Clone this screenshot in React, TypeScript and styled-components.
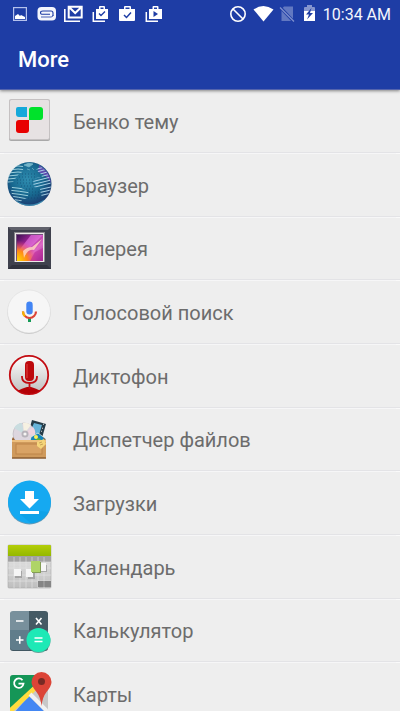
import React from "react";
import styled, { createGlobalStyle } from "styled-components";

const GlobalStyle = createGlobalStyle`
  * { box-sizing: border-box; }
  body {
    margin: 0;
    background: #eeeeee;
    font-family: Roboto, "Noto Sans", sans-serif;
  }
`;

const Screen = styled.div`
  display: flex;
  flex-direction: column;
  height: 100vh;
`;

const Header = styled.header`
  position: relative;
  z-index: 1;
  flex: none;
  background: #1e3da5;
  color: #fff;
  border-bottom: 1px solid #5464ad;
  box-shadow: 0 1px 3px rgba(0, 0, 0, 0.45);
`;

const StatusBar = styled.div`
  display: flex;
  align-items: center;
  justify-content: space-between;
  height: 28px;
  padding: 0 9px 0 12px;
`;

const StatusGroup = styled.div`
  display: flex;
  align-items: center;
  gap: 7px;

  svg {
    display: block;
    overflow: visible;
  }
`;

const Clock = styled.time`
  padding-top: 1px;
  font-size: 16px;
  line-height: 20px;
  font-weight: 400;
  color: #f4f6fd;
`;

const Title = styled.h1`
  margin: 0;
  padding: 18px 18px 15px;
  font-size: 22px;
  line-height: 28px;
  font-weight: 500;
`;

const AppList = styled.ul`
  display: grid;
  flex: 1;
  grid-auto-rows: 64px 64px 63px;
  min-height: 0;
  margin: 0;
  padding: 0;
  list-style: none;
  overflow-y: auto;
  scrollbar-width: none;
`;

const AppItem = styled.li`
  display: flex;
  flex-direction: column;

  &::after {
    content: "";
    height: 2px;
    background: linear-gradient(90deg, #fafafa 4px, transparent 4px calc(100% - 4px), #fafafa calc(100% - 4px)) bottom / 100% 1px no-repeat,
      linear-gradient(#e3e3e6 50%, #f6f6f7 50%);
  }
`;

const AppButton = styled.button`
  display: flex;
  flex: 1;
  align-items: center;
  gap: 20px;
  padding: 0 5px 2px;
  border: 0;
  background: none;
  color: #6c6c6c;
  font: 400 20px/24px Roboto, "Noto Sans", sans-serif;
  text-align: left;
  cursor: pointer;

  svg { flex: none; display: block; }
`;

const Label = styled.span`
  padding-top: 3px;
`;

type IconProps = { children: React.ReactNode };

const AppIcon = ({ children }: IconProps) => (
  <svg width="48" height="48" viewBox="0 0 48 48" aria-hidden="true">{children}</svg>
);

const StatusIcon = ({ children, width = 20 }: IconProps & { width?: number }) => (
  <svg width={width} height="20" viewBox={`0 0 ${width} 20`} aria-hidden="true">{children}</svg>
);

const ThemeIcon = () => (
  <AppIcon>
    <rect x="4" y="4" width="41" height="41" rx="2" fill="#a9a9a9" />
    <rect x="4" y="3" width="41" height="41" rx="2" fill="#c5c1c2" />
    <rect x="5" y="4" width="39" height="39" rx="1.5" fill="#e7e2e3" />
    <path d="M13 11h9v10h-8q-3 0-3-3v-5q0-2 2-2z" fill="#16a8da" />
    <path d="M27 11h8q3 0 3 3v7q0 3-3 3H24V14q0-3 3-3z" fill="#00e22b" />
    <path d="M14 24h10v10q0 3-3 3h-7q-3 0-3-3v-7q0-3 3-3z" fill="#e80000" />
  </AppIcon>
);

const GlobeIcon = () => (
  <AppIcon>
    <defs>
      <radialGradient id="globe" cx="0.45" cy="0.4" r="0.6">
        <stop offset="0" stopColor="#2f8db0" />
        <stop offset="0.6" stopColor="#17688f" />
        <stop offset="1" stopColor="#1b3b70" />
      </radialGradient>
      <clipPath id="west">
        <path d="M3 16Q7 7 14 4l5 1-2 3 2 3-5 3-3 4-3 4-5 1z" />
        <path d="M7 27l6-1 7 4 4 3-2 5-5 2-2 4-5-4-4-8z" />
      </clipPath>
      <clipPath id="east"><path d="M35 6l6 5 4 8 1 8-3 8-4 3-3-3-1-6-6-2-1-5 3-4 6-1-2-4-4-3z" /></clipPath>
    </defs>
    <circle cx="24.500" cy="24" r="22" fill="url(#globe)" />
    <path d="M34 5q11 6 12 18-4-8-13-11z" fill="#6f46b8" opacity=".8" />
    <g stroke="#0f3f66" strokeWidth="1" strokeDasharray="1 2" fill="none" opacity=".55">
      <path d="M17 14h15M14 17h18M12 20h18M12 23h16M16 26h11M21 29h7M24 32h12M24 35h12M23 38h13" />
    </g>
    <path d="M9 39q15 11 31 0-5 7-15 7T9 39z" fill="#4fb6d2" opacity=".6" />
    <g clipPath="url(#west)" stroke="#bfe9ef" strokeWidth=".8" fill="none">
      <path d="M3 7q10-2 20 0M3 10q10-2 20 0M3 13q10-2 20 0M3 16q10-2 20 0M3 19q10-2 20 0M3 22q10-1 20 1" />
      <path d="M3 27q11 1 22 3M3 30q11 1 23 3M3 33q11 1 22 3M5 36q8 1 18 3M5 39q8 1 18 3" />
    </g>
    <g clipPath="url(#east)" stroke="#b8dcef" strokeWidth=".9" fill="none">
      <path d="M28 10l16-4M28 13l18-5M28 16l18-5M26 19l20-5M26 22l20-5M26 25l20-5M26 28l20-5M28 31l18-4M28 34l18-4M30 37l16-4" />
    </g>
    <path d="M19 5l5-2 4 1-4 3zM22 9l3 1M27 8l2 2" fill="#8cc9d8" stroke="#8cc9d8" strokeWidth=".7" opacity=".8" />
  </AppIcon>
);

const GalleryIcon = () => (
  <AppIcon>
    <defs>
      <linearGradient id="photo" x1="0" y1="0" x2="1" y2="1">
        <stop offset="0" stopColor="#3b1151" />
        <stop offset=".35" stopColor="#a32399" />
        <stop offset=".65" stopColor="#df69c5" />
        <stop offset="1" stopColor="#88248b" />
      </linearGradient>
      <radialGradient id="glow" cx="0" cy="1" r=".8">
        <stop offset="0" stopColor="#ffe000" />
        <stop offset=".5" stopColor="#ff8a16" />
        <stop offset="1" stopColor="#f33d87" stopOpacity="0" />
      </radialGradient>
    </defs>
    <rect x="3" y="3" width="43" height="42" fill="#3f414d" />
    <path d="M3 3h43l-3 3H6z" fill="#60616b" />
    <path d="M3 45h43l-4-4H7z" fill="#30323d" />
    <rect x="9" y="8" width="31" height="30" fill="#8a888d" />
    <rect x="10" y="9" width="29" height="29" fill="#ece8e8" />
    <rect x="11" y="10" width="27" height="27" fill="#73527b" />
    <rect x="12" y="11" width="26" height="26" fill="url(#photo)" />
    <path d="M12 29l14-18h12L23 26z" fill="#e97be6" opacity=".6" />
    <rect x="12" y="11" width="26" height="26" fill="url(#glow)" />
    <path d="M18 27q4-4 9-4l10-8-8 11q-6-2-10 8z" fill="#ffd6c2" opacity=".85" />
    <path d="M25 37l5-9 8-4v13z" fill="#c02c9a" opacity=".6" />
  </AppIcon>
);

const VoiceIcon = () => (
  <AppIcon>
    <circle cx="24" cy="25.500" r="21.500" fill="#c6c6c6" />
    <circle cx="24" cy="24.500" r="21.500" fill="#f6f6f6" stroke="#dedede" strokeWidth=".6" />
    <path d="M23 30h3v5h-3z" fill="#159b57" />
    <path d="M18 24.500a6.500 6.500 0 0 0 13 0" fill="none" stroke="#db4437" strokeWidth="2.200" />
    <path d="M18 24.500q0 3 2 4.600" fill="none" stroke="#f4b400" strokeWidth="2.200" />
    <rect x="21.300" y="14.500" width="6.400" height="13" rx="3.200" fill="#4285f4" />
  </AppIcon>
);

const RecorderIcon = () => (
  <AppIcon>
    <defs>
      <linearGradient id="disc" x1="0" y1="0" x2="0" y2="1">
        <stop offset="0" stopColor="#fff" />
        <stop offset="1" stopColor="#bdbdbd" />
      </linearGradient>
      <clipPath id="discClip"><circle cx="24" cy="24" r="19" /></clipPath>
    </defs>
    <circle cx="24" cy="24" r="19.200" fill="url(#disc)" stroke="#c30c12" strokeWidth="1.800" />
    <path d="M10 41q8-4 12-5h4q4 1 12 5l-6 5H17z" fill="#b40006" clipPath="url(#discClip)" />
    <path d="M17 25v1q0 6 7.500 6t7.500-6v-1M24.500 32v6" fill="none" stroke="#c30c12" strokeWidth="1.800" />
    <rect x="20" y="10" width="9" height="20" rx="4" fill="#bd090d" />
    <path d="M22 13v14" stroke="#e04443" strokeWidth="1" />
  </AppIcon>
);

const FilesIcon = () => (
  <AppIcon>
    <path d="M27 5l14 4-4 14-14-4z" fill="#263c48" />
    <path d="M29 8l8 2-3 10-9-3z" fill="#67b4d9" />
    <path d="M38 9l1 .5M37 13l1 .5M36 16l1 .5" stroke="#ddd" />
    <circle cx="19" cy="19" r="11" fill="#ddd6df" stroke="#b7b0b9" strokeWidth=".6" />
    <path d="M19 19L9 13q3-5 8-5z" fill="#c9dde0" />
    <path d="M19 19l9-7q3 4 2 8z" fill="#eed3df" />
    <path d="M19 19l-1-11q4-1 8 2z" fill="#f6f1e2" />
    <circle cx="20" cy="19" r="3.500" fill="#b7b3ba" /><circle cx="20" cy="19" r="1.600" fill="#f6f5f4" />
    <path d="M26 22l7-4 8 6-4 6H24z" fill="#1484b9" stroke="#f5f4eb" strokeWidth=".7" />
    <circle cx="31" cy="22" r="2" fill="#fff052" /><path d="M28 26l6-3 5 5z" fill="#5fae33" />
    <path d="M8 22l2 3h29l-1-3 3 3v3H7v-4z" fill="#9a6538" />
    <rect x="7" y="25" width="34" height="18" rx="1" fill="#cf9a5c" />
    <path d="M7 25h34v2H7z" fill="#edbe7c" />
    <rect x="11" y="29" width="26" height="10" fill="#d9a365" stroke="#bd8448" />
    <path d="M7 43h34" stroke="#8b5c31" strokeWidth="1.500" />
    <path d="M32 27l7-3 2 5-5 5-4-3z" fill="#f5d57a" /><path d="M34 28l3-1M35 30l3-1" stroke="#b6904b" strokeWidth=".7" />
  </AppIcon>
);

const DownloadIcon = () => (
  <AppIcon>
    <circle cx="24.500" cy="25" r="21.500" fill="#6b9db8" />
    <circle cx="24.500" cy="24" r="21.500" fill="#15a9f1" />
    <path d="M34 33l10 1q-6 11-18 11.500L15 36z" fill="#0694d7" opacity=".35" />
    <path d="M20 13h9v8h5l-9.500 9.500L15 21h5zM15 33h19v3H15z" fill="#fff" />
  </AppIcon>
);

const CalendarIcon = () => (
  <AppIcon>
    <defs>
      <linearGradient id="band" x1="0" y1="0" x2="0" y2="1"><stop offset="0" stopColor="#b4ce08" /><stop offset="1" stopColor="#94b800" /></linearGradient>
      <linearGradient id="pad" x1="0" y1="0" x2="0" y2="1"><stop offset="0" stopColor="#b0b0b0" /><stop offset=".45" stopColor="#dadada" /><stop offset="1" stopColor="#bebebe" /></linearGradient>
    </defs>
    <rect x="3" y="3" width="43" height="43" rx="1" fill="url(#pad)" stroke="#a8a8a8" strokeWidth=".6" />
    <path d="M3 4q0-1 1-1h41q1 0 1 1v10H3z" fill="url(#band)" />
    <path d="M3 14h43v6H3z" fill="#a2a2a2" />
    <path d="M9 15v31M15 15v31M21 15v31M27 15v31M33 15v31M39 15v31M3 20h43M3 26h43M3 33h43M3 39h43" stroke="#e6e6e6" strokeWidth=".6" />
    <path d="M33 39h13v6H33z" fill="#858585" /><path d="M39 39v6" stroke="#aaa" />
    <path d="M23 29h7v8h-7zM10 29h7v7h-7zM36 23h6v7h-6z" fill="#888" opacity=".6" />
    <path d="M9 27h7v7H9zM21 27h7v8h-7zM35 21h6v8h-6z" fill="#f6f6f6" />
    <rect x="27" y="20" width="9" height="11" fill="#849e54" />
    <rect x="26" y="19" width="9" height="11" fill="#afd467" />
  </AppIcon>
);

const CalculatorIcon = () => (
  <AppIcon>
    <rect x="5" y="6" width="38" height="39" rx="3" fill="#415761" />
    <path d="M8 5h16v19H5V8q0-3 3-3z" fill="#78909c" />
    <path d="M24 5h16q3 0 3 3v16H24z" fill="#455a64" />
    <path d="M5 24h19v20H8q-3 0-3-3z" fill="#607d8b" />
    <path d="M24 24h19v17q0 3-3 3H24z" fill="#526b77" />
    <path d="M11 15h7.500M31 12l5.500 6.500m0-6.500L31 18.500M11 34h7.500m-3.750-3.750v7.500" stroke="#fff" strokeWidth="1.600" />
    <circle cx="33.500" cy="35" r="12" fill="#438f82" opacity=".8" />
    <circle cx="33.500" cy="34" r="12" fill="#1de9b6" />
    <path d="M29.500 32h8M29.500 35.500h8" stroke="#fff" strokeWidth="1.600" />
  </AppIcon>
);

const MapsIcon = () => (
  <AppIcon>
    <defs><clipPath id="map"><rect x="5" y="6" width="38" height="39" rx="3" /></clipPath></defs>
    <g clipPath="url(#map)">
      <path d="M5 6h38v39H5z" fill="#c8c8c8" />
      <path d="M5 6h35L5 41z" fill="#159657" />
      <path d="M8 45l16-18 18 18z" fill="#4387f3" />
      <path d="M3 44l27-25" stroke="#ffdc3e" strokeWidth="5" />
      <path d="M25 25l20 20" stroke="#f1f1f1" strokeWidth="4" />
    </g>
    <path d="M17.500 11.200a4.700 4.700 0 1 0 1 3.500h-5" fill="none" stroke="#fff" strokeWidth="1.800" />
    <path d="M36.500 37q-1-9-5-14-5-6-5-10a10 10 0 0 1 20 0q0 4-5 10-4 5-5 14z" fill="#dc4437" />
    <circle cx="36.500" cy="12.500" r="3.500" fill="#782a24" />
  </AppIcon>
);

const apps = [
  { name: "Бенко тему", Icon: ThemeIcon },
  { name: "Браузер", Icon: GlobeIcon },
  { name: "Галерея", Icon: GalleryIcon },
  { name: "Голосовой поиск", Icon: VoiceIcon },
  { name: "Диктофон", Icon: RecorderIcon },
  { name: "Диспетчер файлов", Icon: FilesIcon },
  { name: "Загрузки", Icon: DownloadIcon },
  { name: "Календарь", Icon: CalendarIcon },
  { name: "Калькулятор", Icon: CalculatorIcon },
  { name: "Карты", Icon: MapsIcon },
];

export default function App() {
  return (
    <Screen>
      <GlobalStyle />
      <Header>
        <StatusBar>
          <StatusGroup>
            <StatusIcon>
              <rect x="1.600" y="3.600" width="12.800" height="12.800" fill="none" stroke="#b4c1ec" strokeWidth="1.200" />
              <path d="M3 15v-3l3-2 2 2 1-1 4 2v2z" fill="#fff" />
            </StatusIcon>
            <StatusIcon>
              <rect x="-1.500" y="3" width="18.500" height="13.500" rx="4" fill="#f4f6fd" />
              <path d="M14 12V9q0-2-2-2H4q-2.500 0-2.500 1.700T4 10.300h7" fill="none" stroke="#1e3da5" strokeWidth="1.100" />
              <path d="M2 13h10q2 0 2-2" fill="none" stroke="#1e3da5" strokeWidth=".8" />
            </StatusIcon>
            <StatusIcon>
              <path d="M-1.200 5v12.200H14" fill="none" stroke="#fff" strokeWidth="1.600" />
              <path d="M2.700 2.800h13v10.700h-13zM3.500 3.500l5.700 5.500 5.700-5.500" fill="none" stroke="#fff" strokeWidth="2" />
            </StatusIcon>
            <StatusIcon>
              <path d="M.3 8v9.200H12" fill="none" stroke="#fff" strokeWidth="1.500" />
              <path d="M3 5h3V3q0-1 1-1h4q1 0 1 1v2h3v10H3zM7.500 5h3V3.500h-3z" fill="#fff" fillRule="evenodd" />
              <path d="M6 9.500l2 2 4-4" fill="none" stroke="#1e3da5" strokeWidth="1.400" />
            </StatusIcon>
            <StatusIcon>
              <path d="M0 5h4V3q0-1 1-1h5q1 0 1 1v2h4v11q0 1-1 1H0q-1 0-1-1V5zM5.500 5h4V3.500h-4z" fill="#fff" fillRule="evenodd" />
              <path d="M4 11l2.500 2.500L11 8.500" fill="none" stroke="#1e3da5" strokeWidth="1.500" />
            </StatusIcon>
            <StatusIcon>
              <path d="M-.7 8v9.200H11" fill="none" stroke="#fff" strokeWidth="1.500" />
              <path d="M2 5h3.500V3q0-1 1-1h4q1 0 1 1v2H15v10H2zM7 5h3V3.500H7z" fill="#fff" fillRule="evenodd" />
              <path d="M6.500 7l4.500 3-4.500 3z" fill="#1e3da5" />
            </StatusIcon>
          </StatusGroup>
          <StatusGroup>
            <StatusIcon>
              <circle cx="11" cy="10" r="7.200" fill="none" stroke="#fff" strokeWidth="1.600" />
              <path d="M6 5l10 10" stroke="#fff" strokeWidth="1.600" />
            </StatusIcon>
            <StatusIcon><path d="M-.5 5.500q10-7 20 0l-10 12z" fill="#fff" /></StatusIcon>
            <StatusIcon width={16}>
              <path d="M3 2.500h9V17H.5V5z" fill="#6278c1" />
              <path d="M-1 3l14 15" stroke="#1e3da5" strokeWidth="3" />
              <path d="M-1 3.500l14 14" stroke="#8091ce" strokeWidth="1.200" />
            </StatusIcon>
            <StatusIcon width={12}>
              <path d="M0 4q0-1 1-1h2V1h5v2h2q1 0 1 1v4H0z" fill="#8796cf" />
              <path d="M0 7h11v10H0z" fill="#fff" />
              <path d="M7.500 4L2 10.500h3l-2 5 6-6.500H6z" fill="#1e3da5" />
            </StatusIcon>
            <Clock>10:34 AM</Clock>
          </StatusGroup>
        </StatusBar>
        <Title>More</Title>
      </Header>
      <AppList>
        {apps.map(({ name, Icon }) => (
          <AppItem key={name}>
            <AppButton type="button">
              <Icon />
              <Label>{name}</Label>
            </AppButton>
          </AppItem>
        ))}
      </AppList>
    </Screen>
  );
}
